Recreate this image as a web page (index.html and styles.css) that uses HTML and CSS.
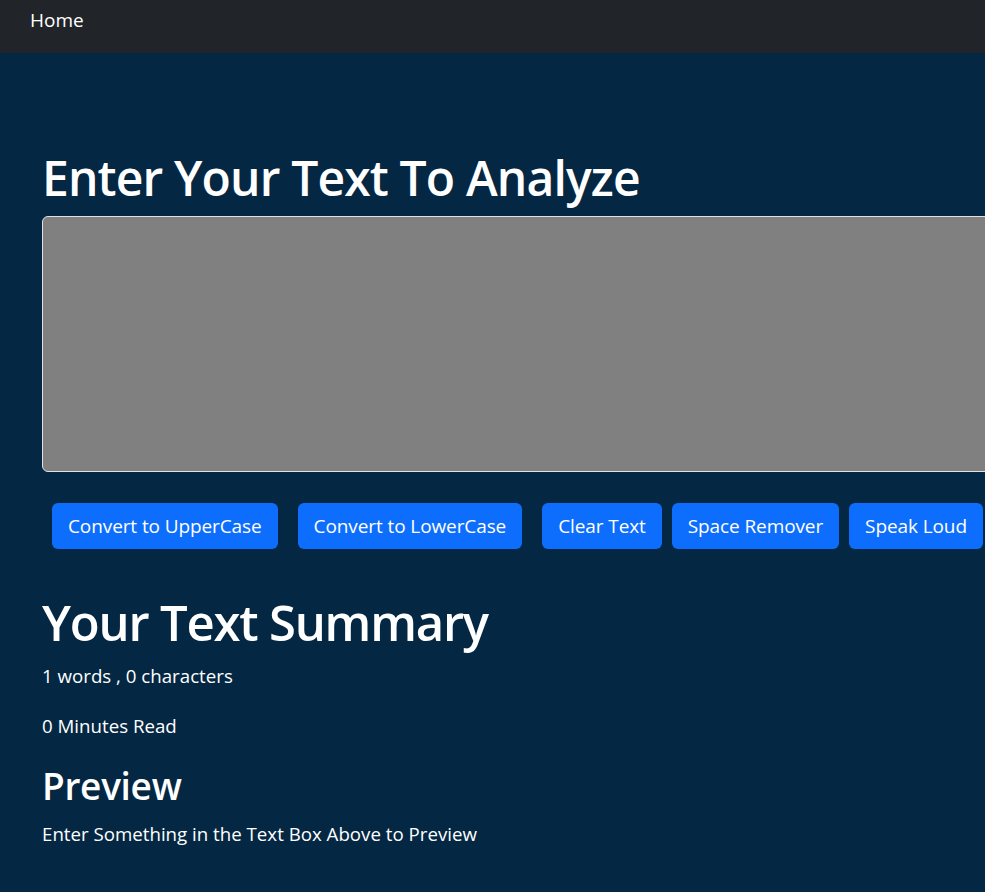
FILE: index.html
```html
<!DOCTYPE html>
<html lang="en">
<head>
<meta charset="utf-8">
<title>TextUtils</title>
<link rel="stylesheet" href="styles.css">
</head>
<body>
<nav class="navbar">
  <a class="nav-link" href="#">Home</a>
</nav>
<main class="main">
  <h1 class="title">Enter Your Text To Analyze</h1>
  <textarea class="textbox" rows="8"></textarea>
  <div class="actions">
    <button class="btn btn-wide">Convert to UpperCase</button>
    <button class="btn btn-wide">Convert to LowerCase</button>
    <button class="btn">Clear Text</button>
    <button class="btn">Space Remover</button>
    <button class="btn">Speak Loud</button>
  </div>
  <h1 class="summary">Your Text Summary</h1>
  <p class="stat">1 words , 0 characters</p>
  <p class="stat">0 Minutes Read</p>
  <h2 class="preview">Preview</h2>
  <p class="stat">Enter Something in the Text Box Above to Preview</p>
</main>
</body>
</html>
```
FILE: styles.css
```css
html, body {
  margin: 0;
  padding: 0;
  overflow: hidden;
  height: 100%;
}
body {
  background: #042743;
  color: #fff;
  font-family: "Open Sans", "Noto Sans", sans-serif;
}
.navbar {
  background: #212529;
  height: 53px;
  display: flex;
  align-items: flex-start;
  padding-left: 30px;
  box-sizing: border-box;
}
.nav-link {
  color: #fff;
  text-decoration: none;
  font-size: 19px;
  line-height: 20px;
  margin-top: 10px;
}
.main {
  padding: 95px 0 0 42px;
}
.title {
  margin: 0;
  font-size: 48px;
  font-weight: 600;
  line-height: 60px;
  letter-spacing: -0.85px;
}
.textbox {
  display: block;
  margin-top: 8px;
  width: 1000px;
  height: 256px;
  box-sizing: border-box;
  background: #808080;
  border: 1px solid #dee2e6;
  border-radius: 6px;
  resize: none;
}
.actions {
  display: flex;
  gap: 10px;
  margin: 31px 0 0 10px;
}
.btn {
  height: 46px;
  padding: 0 16px;
  background: #0d6efd;
  color: #fff;
  border: none;
  border-radius: 6px;
  font-family: inherit;
  font-size: 19px;
  letter-spacing: -0.1px;
  flex: none;
}
.btn-wide {
  margin-right: 10px;
}
.summary {
  margin: 43px 0 0;
  font-size: 49px;
  font-weight: 600;
  line-height: 60px;
  letter-spacing: -1.2px;
}
.stat {
  margin: 9px 0 0;
  font-size: 18.7px;
  line-height: 30px;
}
.stat + .stat {
  margin-top: 20px;
}
.preview {
  margin: 23px 0 0;
  font-size: 37px;
  font-weight: 600;
  line-height: 44px;
  letter-spacing: -0.3px;
}
.preview + .stat {
  margin-top: 11px;
}
```
